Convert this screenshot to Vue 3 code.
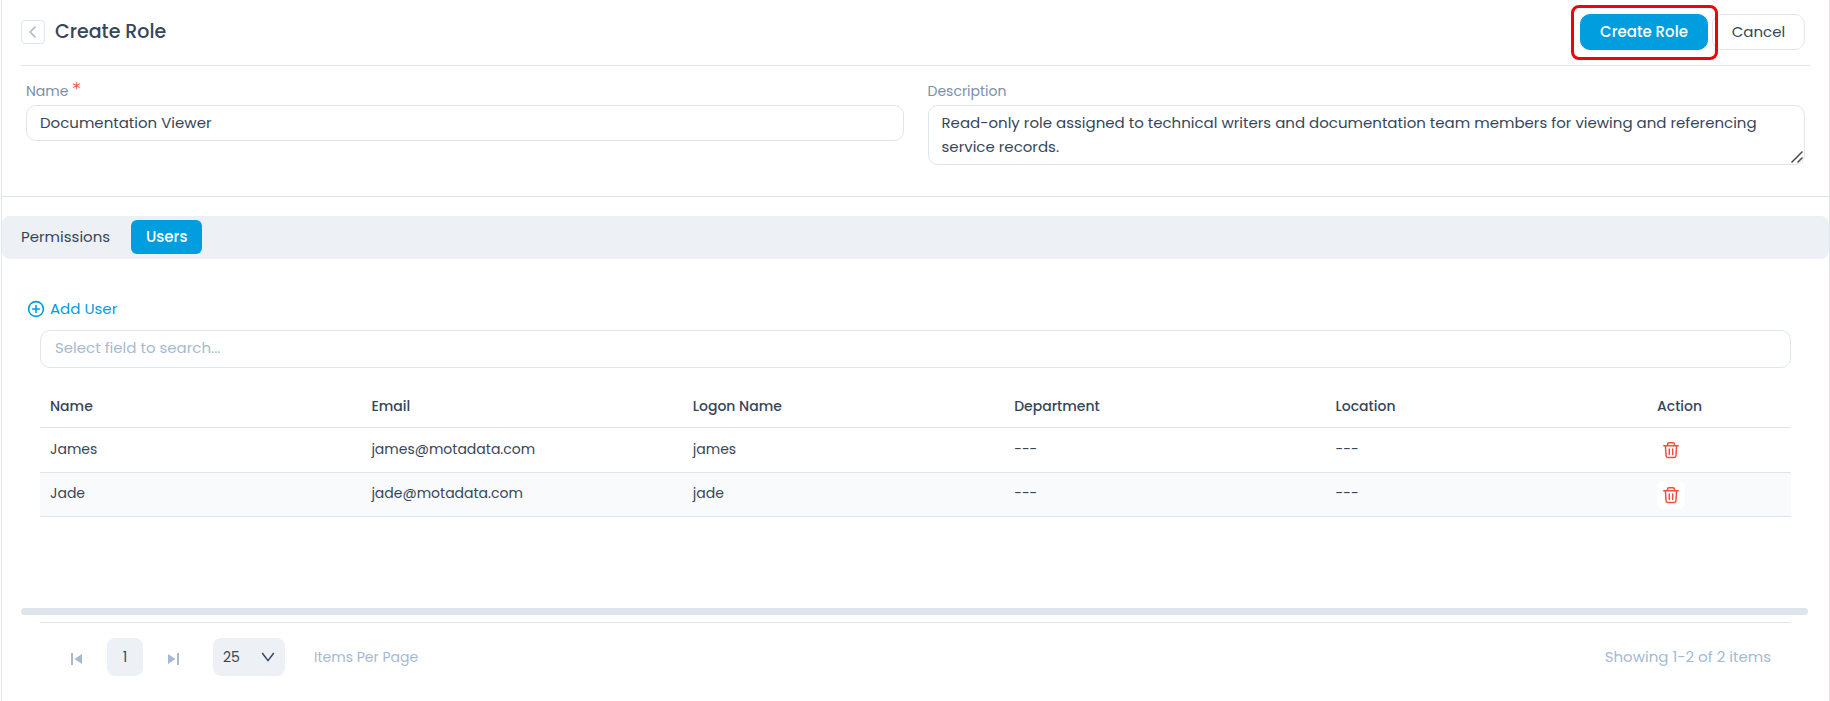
<script setup>
import { ref } from 'vue'

const name = ref('Documentation Viewer')
const description = ref(
  'Read-only role assigned to technical writers and documentation team members for viewing and referencing service records.'
)
const search = ref('')
const pageSize = ref('25')
const columns = ['Name', 'Email', 'Logon Name', 'Department', 'Location', 'Action']
const users = [
  { name: 'James', email: 'james@motadata.com', logon: 'james', department: '---', location: '---' },
  { name: 'Jade', email: 'jade@motadata.com', logon: 'jade', department: '---', location: '---' },
]
</script>

<template>
  <main class="page">
    <header class="header">
      <button class="back" type="button" aria-label="Back">
        <svg width="12" height="12" viewBox="0 0 12 12" fill="none" stroke="#a5b9d2" stroke-width="1.6" stroke-linecap="round" stroke-linejoin="round">
          <path d="M8 1 3.2 6 8 11" />
        </svg>
      </button>
      <h1 class="title">Create Role</h1>
      <div class="actions">
        <div class="highlight">
          <button class="btn primary" type="button">Create Role</button>
        </div>
        <button class="btn" type="button">Cancel</button>
      </div>
    </header>

    <form class="form" @submit.prevent>
      <div class="field">
        <label for="role-name">Name<span class="required">*</span></label>
        <input id="role-name" v-model="name" class="control" type="text" />
      </div>
      <div class="field">
        <label for="role-description">Description</label>
        <div class="area-box">
          <textarea id="role-description" v-model="description" class="control area" rows="2"></textarea>
          <svg class="grip" width="12" height="12" viewBox="0 0 12 12" fill="none" stroke="#4a4a4a" stroke-width="1.5">
            <path d="M.5 11.5l11-11M6.5 11.5l5-5" />
          </svg>
        </div>
      </div>
    </form>

    <nav class="tabs">
      <button class="tab" type="button">Permissions</button>
      <button class="tab active" type="button">Users</button>
    </nav>

    <section class="users">
      <button class="add" type="button">
        <svg width="18" height="18" viewBox="0 0 18 18" fill="none" stroke="currentColor" stroke-width="1.6" stroke-linecap="round">
          <circle cx="9" cy="9" r="7.4" />
          <path d="M9 5.6v6.8M5.6 9h6.8" />
        </svg>
        Add User
      </button>
      <input v-model="search" class="search" type="text" placeholder="Select field to search..." aria-label="Select field to search" />
      <table class="table">
        <thead>
          <tr>
            <th v-for="column in columns" :key="column" scope="col">{{ column }}</th>
          </tr>
        </thead>
        <tbody>
          <tr v-for="user in users" :key="user.logon">
            <td>{{ user.name }}</td>
            <td>{{ user.email }}</td>
            <td>{{ user.logon }}</td>
            <td>{{ user.department }}</td>
            <td>{{ user.location }}</td>
            <td>
              <button class="delete" type="button" :aria-label="'Remove ' + user.name">
                <svg width="16" height="18" viewBox="0 0 16 18" fill="none" stroke="#f04e3e" stroke-width="1.5" stroke-linejoin="round" stroke-linecap="round">
                  <path d="M.8 4.8h14.4M4.6 4.6V3q0-1.2 1.2-1.2h4.4q1.2 0 1.2 1.2v1.6M2.4 5l.7 10q.1 1.4 1.5 1.4h6.8q1.4 0 1.5-1.4l.7-10M6.3 8v5.4M9.7 8v5.4" />
                </svg>
              </button>
            </td>
          </tr>
        </tbody>
      </table>
    </section>

    <div class="scrollbar"></div>

    <footer class="footer">
      <button class="step" type="button" aria-label="First page">
        <svg width="12" height="12" viewBox="0 0 12 12" fill="#a5b9d2"><path d="M0 0h2v12H0zM11 1v10L3.5 6z" /></svg>
      </button>
      <button class="current" type="button">1</button>
      <button class="step" type="button" aria-label="Last page">
        <svg width="12" height="12" viewBox="0 0 12 12" fill="#a5b9d2"><path d="M10 0h2v12h-2zM1 1v10l7.5-5z" /></svg>
      </button>
      <div class="size">
        <select id="page-size" v-model="pageSize">
          <option>25</option>
          <option>50</option>
          <option>100</option>
        </select>
        <svg class="chevron" width="14" height="10" viewBox="0 0 14 10" fill="none" stroke="#364658" stroke-width="1.5"><path d="M1.2 1 7 8.6 12.8 1" /></svg>
      </div>
      <label class="per-page" for="page-size">Items Per Page</label>
      <span class="summary">Showing 1-2 of 2 items</span>
    </footer>
  </main>
</template>

<style>
body {
  margin: 0;
  background: #fff;
}
</style>

<style scoped>
.page {
  box-sizing: border-box;
  display: flex;
  flex-direction: column;
  min-height: 100vh;
  margin-left: 1px;
  border: solid #dfe5ed;
  border-width: 0 1px;
  font-family: Poppins, Inter, sans-serif;
  font-size: 15px;
  line-height: 24px;
  color: #364658;
}
button,
input,
textarea,
select {
  box-sizing: border-box;
  margin: 0;
  font: inherit;
  color: inherit;
}
button {
  border: 0;
  padding: 0;
  background: none;
}
.header {
  display: flex;
  align-items: center;
  margin: 0 19px;
  padding: 14px 5px 15px 0;
  border-bottom: 1px solid #dfe5ed;
}
.back {
  display: flex;
  align-items: center;
  justify-content: center;
  width: 24px;
  height: 24px;
  border: 1px solid #dfe5ed;
  border-radius: 4px;
}
.title {
  margin: 0 0 0 10px;
  font-size: 19px;
  font-weight: 500;
}
.actions {
  display: flex;
  gap: 4px;
  margin-left: auto;
}
.highlight {
  position: relative;
}
.highlight::after {
  content: '';
  position: absolute;
  inset: -9px -10px -10px -9px;
  z-index: 1;
  border: 3px solid #ea0606;
  border-radius: 8px;
  pointer-events: none;
}
.btn {
  min-width: 93px;
  height: 36px;
  padding: 0 18px;
  border: 1px solid #dfe5ed;
  border-radius: 10px;
}
.primary {
  min-width: 128px;
  border-color: #009ddf;
  background: #009ddf;
  color: #fff;
  font-weight: 500;
}
.form {
  display: grid;
  grid-template-columns: 1fr 1fr;
  gap: 24px;
  padding: 13px 24px 31px;
  border-bottom: 1px solid #dfe5ed;
}
.field {
  display: flex;
  flex-direction: column;
  gap: 2px;
}
.field label {
  display: flex;
  height: 24px;
  color: #7b8fa5;
  font-size: 14px;
}
.required {
  margin-left: 4px;
  color: #f04e3e;
  font-family: "DejaVu Sans", sans-serif;
  font-size: 16px;
  line-height: 20px;
}
.control {
  width: 100%;
  height: 36px;
  padding: 0 13px 1px;
  border: 1px solid #dfe5ed;
  border-radius: 10px;
  background: #fff;
}
.area-box {
  position: relative;
}
.area {
  display: block;
  height: 60px;
  padding: 5px 13px;
  resize: vertical;
}
.area::-webkit-resizer {
  background: transparent;
}
.grip {
  position: absolute;
  right: 2px;
  bottom: 2px;
  pointer-events: none;
}
.tabs {
  display: flex;
  gap: 4px;
  margin-top: 19px;
  padding: 4px 4px 5px;
  border-radius: 8px;
  background: #edf1f6;
}
.tab {
  height: 34px;
  padding: 0 15px;
  border-radius: 6px;
}
.tab:first-child {
  min-width: 121px;
  text-align: left;
}
.active {
  min-width: 71px;
  background: #009ddf;
  color: #fff;
  font-weight: 500;
}
.users {
  flex: 1;
  padding: 38px 38px 0;
}
.add {
  display: flex;
  align-items: center;
  gap: 5px;
  height: 24px;
  margin: 0 0 9px -13px;
  color: #009ddf;
}
.search {
  display: block;
  width: 100%;
  height: 38px;
  padding: 0 14px 3px;
  border: 1px solid #dfe5ed;
  border-radius: 10px;
  background: #fff;
}
.search::placeholder {
  color: #a5b9d2;
  opacity: 1;
}
.table {
  width: 100%;
  margin-top: 16px;
  border-collapse: separate;
  border-spacing: 0;
  table-layout: fixed;
  font-size: 14px;
}
.table th,
.table td {
  box-sizing: border-box;
  height: 45px;
  padding: 0 10px 2px;
  border-bottom: 1px solid #dfe5ed;
  text-align: left;
}
.table th {
  height: 44px;
  padding-bottom: 0;
  font-weight: 500;
}
.table th:last-child {
  width: 144px;
}
.table tbody tr:nth-child(even) td {
  height: 44px;
  padding-bottom: 3px;
  background: #f9fafc;
}
.table tbody td:last-child,
.table tbody tr:nth-child(even) td:last-child {
  padding-bottom: 0;
}
.delete {
  display: flex;
  align-items: center;
  justify-content: center;
  width: 28px;
  height: 28px;
  border-radius: 6px;
  background: #fff;
}
.scrollbar {
  height: 7px;
  margin: 0 21px 7px 19px;
  border-radius: 4px;
  background: #dfe5ed;
}
.footer {
  display: flex;
  align-items: center;
  margin: 0 38px;
  padding: 15px 20px 25px 19px;
  border-top: 1px solid #dfe5ed;
  color: #a5b9d2;
}
.step {
  display: flex;
  align-items: center;
  justify-content: center;
  width: 36px;
  height: 36px;
  padding-top: 4px;
}
.current {
  width: 36px;
  height: 38px;
  margin: 0 12px;
  border-radius: 8px;
  background: #edf1f6;
  color: #364658;
  font-size: 14px;
}
.size {
  position: relative;
  margin-left: 22px;
  color: #364658;
  font-size: 14px;
}
.size select {
  display: block;
  width: 72px;
  height: 38px;
  padding: 0 10px;
  border: 0;
  border-radius: 8px;
  appearance: none;
  background: #edf1f6;
}
.chevron {
  position: absolute;
  top: 14px;
  right: 10px;
  pointer-events: none;
}
.per-page {
  margin-left: 29px;
  font-size: 14px;
}
.summary {
  margin-left: auto;
}
</style>
